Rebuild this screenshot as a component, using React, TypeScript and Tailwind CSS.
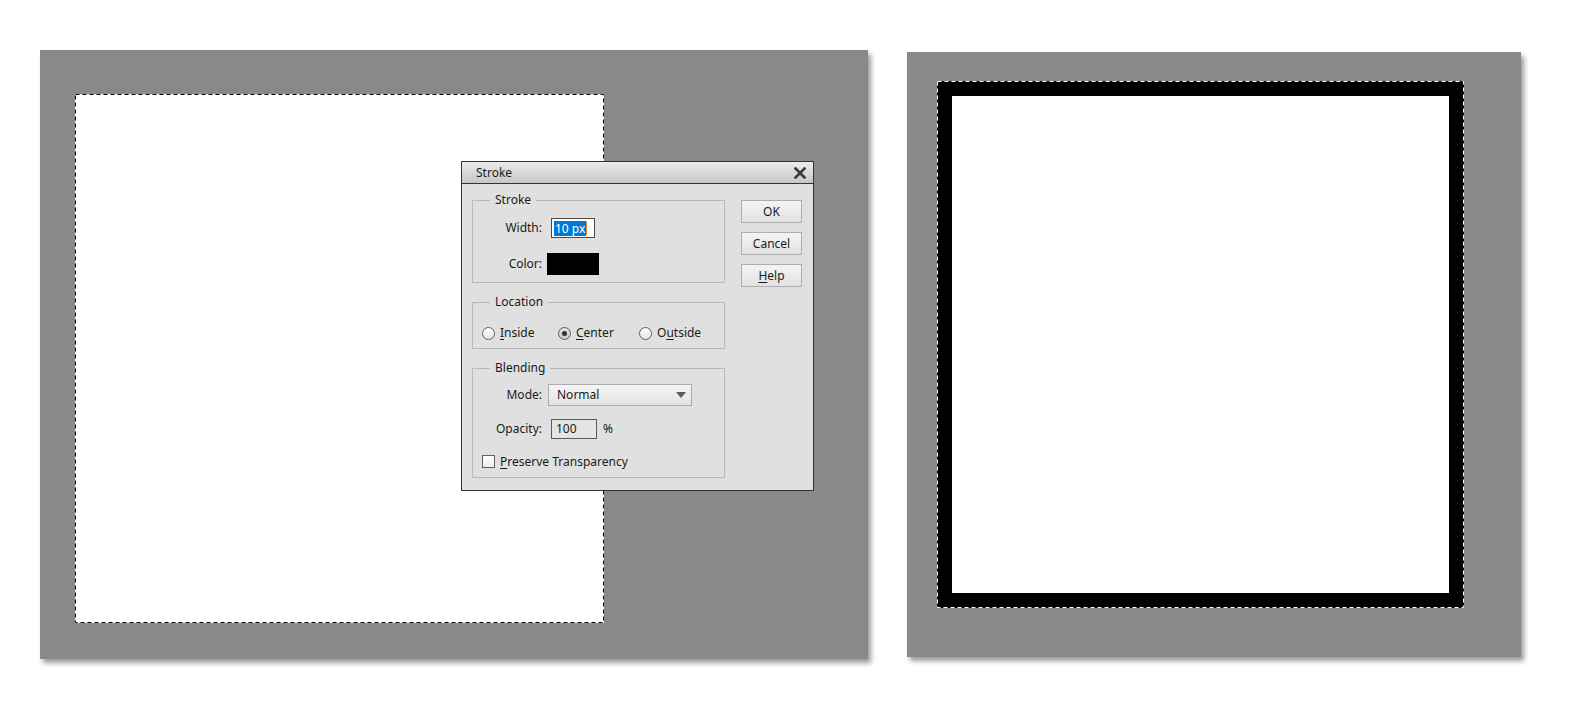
import React from 'react';

const font = { fontFamily: '"Noto Sans", "Open Sans", sans-serif' };

// marching-ants outline drawn over a selection
function Ants({ color, gap }: { color: string; gap: string }) {
  return (
    <svg className="pointer-events-none absolute inset-0 h-full w-full" preserveAspectRatio="none">
      <rect x="0.5" y="0.5" width="calc(100% - 1px)" height="calc(100% - 1px)" fill="none" stroke={gap} strokeWidth="1" />
      <rect x="0.5" y="0.5" width="calc(100% - 1px)" height="calc(100% - 1px)" fill="none" stroke={color} strokeWidth="1" strokeDasharray="4 3" />
    </svg>
  );
}

function Radio({ checked, children, className }: { checked?: boolean; children: React.ReactNode; className?: string }) {
  return (
    <div className={`flex items-center ${className ?? ''}`}>
      <span
        className={`flex h-[13px] w-[13px] items-center justify-center rounded-full border border-[#5f5f5f] bg-gradient-to-b ${
          checked ? 'from-[#e2e2e2] to-[#c8c8c8]' : 'from-[#fdfdfd] to-[#e6e6e6]'
        }`}
      >
        {checked && <span className="h-[5px] w-[5px] rounded-full bg-[#333]" />}
      </span>
      <span className="ml-[5px]">{children}</span>
    </div>
  );
}

function Btn({ children }: { children: React.ReactNode }) {
  return (
    <button className="flex h-[23px] w-[61px] items-center justify-center border border-[#adadad] bg-gradient-to-b from-[#f4f4f4] to-[#e2e2e2] text-[12px] text-[#1a1a1a]">
      {children}
    </button>
  );
}

function StrokeDialog() {
  return (
    <div className="absolute left-[421px] top-[111px] h-[330px] w-[353px] border border-[#333] bg-[#e0e0e0] text-[12px] leading-[16px] text-[#1a1a1a]">
      {/* title bar */}
      <div className="flex h-[22px] items-center justify-between border-b border-[#333] bg-gradient-to-b from-[#ececec] to-[#c6c6c6] pl-[14px] pr-[6px]">
        <span>Stroke</span>
        <svg width="12" height="12" viewBox="0 0 12 12" className="mr-[1px]">
          <path d="M1.5 1.5 L10.5 10.5 M10.5 1.5 L1.5 10.5" stroke="#3a3a3a" strokeWidth="2.6" strokeLinecap="square" />
        </svg>
      </div>

      <div className="flex pl-[10px]">
        <div className="w-[253px]">
          {/* Stroke */}
          <fieldset className="mt-[8px] border border-[#b9b9b9] pb-[7px]">
            <legend className="ml-[17px] px-[5px] leading-[16px]">Stroke</legend>
            <div className="mt-[10px] flex items-center">
              <span className="w-[69px] text-right">Width:</span>
              <span className="ml-[9px] flex h-[20px] w-[44px] items-center border border-[#474747] bg-white pl-[2px]">
                <span className="bg-[#0078d7] px-[1px] leading-[15px] text-white">10 px</span>
                <span className="h-[14px] w-[1px] bg-[#e8822a]" />
              </span>
            </div>
            <div className="mt-[15px] flex items-center">
              <span className="w-[69px] text-right">Color:</span>
              <span className="ml-[5px] h-[22px] w-[52px] bg-black" />
            </div>
          </fieldset>

          {/* Location */}
          <fieldset className="mt-[11px] border border-[#b9b9b9] pb-[7px]">
            <legend className="ml-[17px] px-[5px] leading-[16px]">Location</legend>
            <div className="mt-[15px] flex h-[16px] items-center pl-[9px]">
              <Radio className="w-[76px]">
                <span className="underline underline-offset-2">I</span>nside
              </Radio>
              <Radio checked className="w-[81px]">
                <span className="underline underline-offset-2">C</span>enter
              </Radio>
              <Radio>
                O<span className="underline underline-offset-2">u</span>tside
              </Radio>
            </div>
          </fieldset>

          {/* Blending */}
          <fieldset className="mt-[11px] border border-[#b9b9b9] pb-[9px]">
            <legend className="ml-[17px] px-[5px] leading-[16px]">Blending</legend>
            <div className="mt-[8px] flex items-center">
              <span className="w-[69px] text-right">Mode:</span>
              <div className="ml-[6px] flex h-[22px] w-[144px] items-center justify-between border border-[#acacac] bg-gradient-to-b from-[#f5f5f5] to-[#e3e3e3] pl-[8px] pr-[5px]">
                <span>Normal</span>
                <svg width="10" height="6" viewBox="0 0 10 6">
                  <path d="M0 0 H10 L5 6 Z" fill="#5a5a5a" />
                </svg>
              </div>
            </div>
            <div className="mt-[13px] flex items-center">
              <span className="w-[69px] text-right">Opacity:</span>
              <span className="ml-[9px] flex h-[20px] w-[46px] items-center border border-[#5a5a5a] bg-[#e4e4e4] pl-[4px]">100</span>
              <span className="ml-[6px]">%</span>
            </div>
            <div className="mt-[16px] flex h-[13px] items-center pl-[9px]">
              <span className="h-[13px] w-[13px] border border-[#5f5f5f] bg-gradient-to-b from-[#fdfdfd] to-[#ececec]" />
              <span className="ml-[5px]">
                <span className="underline underline-offset-2">P</span>reserve Transparency
              </span>
            </div>
          </fieldset>
        </div>

        {/* buttons */}
        <div className="ml-[16px] flex flex-col gap-[9px] pt-[16px]">
          <Btn>OK</Btn>
          <Btn>Cancel</Btn>
          <Btn>
            <span className="underline underline-offset-2">H</span>elp
          </Btn>
        </div>
      </div>
    </div>
  );
}

export default function App() {
  return (
    <div className="flex h-[709px] w-[1582px] items-start overflow-hidden bg-white" style={font}>
      {/* before: selection with stroke dialog */}
      <div className="relative ml-[40px] mt-[50px] h-[609px] w-[828px] bg-[#898989] pl-[35px] pt-[44px] shadow-[3px_4px_5px_rgba(0,0,0,0.4)]">
        <div className="relative h-[529px] w-[529px] bg-white">
          <Ants color="#000" gap="#fff" />
        </div>
        <StrokeDialog />
      </div>

      {/* after: stroked selection */}
      <div className="ml-[39px] mt-[52px] h-[605px] w-[614px] bg-[#898989] pl-[30px] pt-[29px] shadow-[3px_4px_5px_rgba(0,0,0,0.4)]">
        <div className="relative h-[527px] w-[527px] bg-black p-[15px]">
          <div className="h-full w-full bg-white" />
          <Ants color="#fff" gap="#000" />
        </div>
      </div>
    </div>
  );
}
